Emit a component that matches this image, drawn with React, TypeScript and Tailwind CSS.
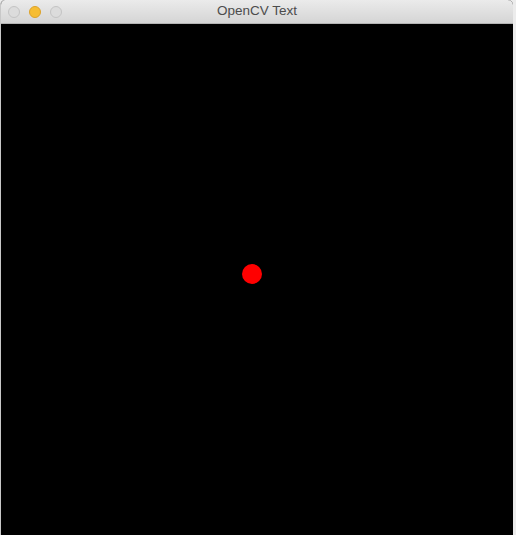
import React from 'react';

const Light = ({ color, ring }: { color: string; ring: string }) => (
  <span
    className="block w-[12px] h-[12px] rounded-full border"
    style={{ background: color, borderColor: ring }}
  />
);

export default function App() {
  return (
    <div className="flex w-[516px] h-[535px] bg-[#ececec] overflow-hidden">
      <div className="flex flex-col w-[513px] h-full border-l border-[#c8c8c8] bg-black rounded-t-[5px] overflow-hidden">
        <div className="relative flex items-center h-[24px] px-[7px] gap-[9px] bg-gradient-to-b from-[#ebebeb] to-[#d5d5d5] border-b border-[#b4b4b4]">
          <Light color="#dcdcdc" ring="#c4c4c4" />
          <Light color="#f6bd33" ring="#dca22a" />
          <Light color="#dcdcdc" ring="#c4c4c4" />
          <span
            className="absolute left-0 right-0 text-center text-[13.5px] text-[#4c4c4c] pointer-events-none"
            style={{ fontFamily: '"Helvetica Neue", "Liberation Sans", Arial, sans-serif' }}
          >
            OpenCV Text
          </span>
        </div>
        <div className="flex-1 bg-black">
          <div className="ml-[241px] mt-[240px] w-[20px] h-[20px] rounded-full bg-[#ff0000]" />
        </div>
      </div>
    </div>
  );
}
